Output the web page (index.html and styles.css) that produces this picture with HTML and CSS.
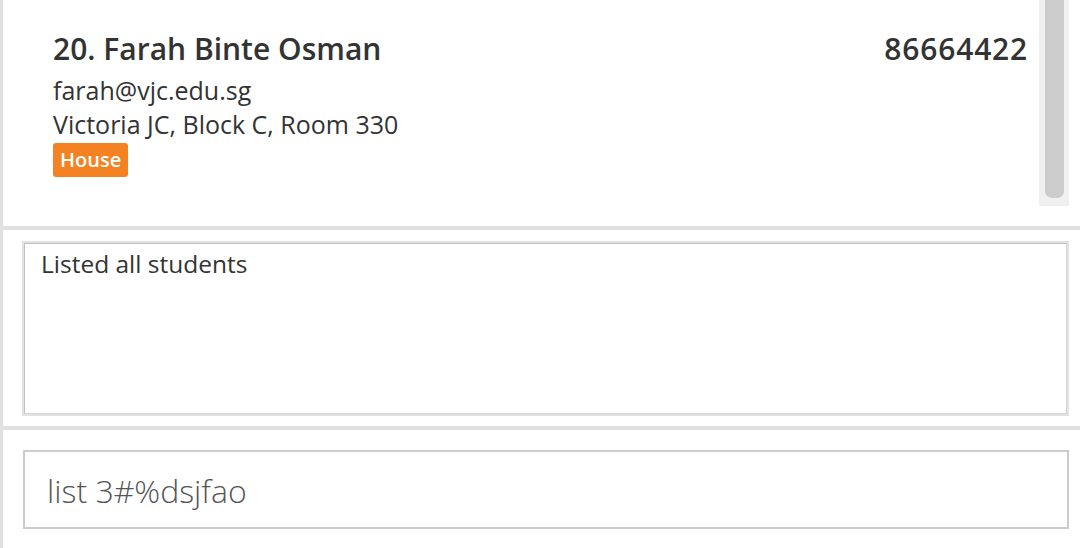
FILE: index.html
```html
<!DOCTYPE html>
<html>
<head>
<meta charset="utf-8">
<link rel="stylesheet" href="styles.css">
</head>
<body>
<div class="app">
  <section class="list-panel">
    <div class="card">
      <div class="card-info">
        <div class="name">20. Farah Binte Osman</div>
        <div class="line">farah@vjc.edu.sg</div>
        <div class="line">Victoria JC, Block C, Room 330</div>
        <div class="tags"><span class="tag">House</span></div>
      </div>
      <div class="phone">86664422</div>
    </div>
    <div class="scroll-track"><div class="scroll-thumb"></div></div>
  </section>
  <div class="sep"></div>
  <section class="result-panel">
    <div class="result-box">
      <div class="result-inner">Listed all students</div>
    </div>
  </section>
  <div class="sep"></div>
  <section class="command-panel">
    <div class="command-box">list 3#%dsjfao</div>
  </section>
</div>
</body>
</html>
```
FILE: styles.css
```css
html, body {
  margin: 0;
  padding: 0;
  background: #ffffff;
  font-family: "Open Sans", "Noto Sans", sans-serif;
  color: #333333;
}
.app {
  width: 1080px;
  height: 548px;
  overflow: hidden;
  display: flex;
  flex-direction: column;
}
.list-panel {
  height: 226px;
  border-left: 3px solid #e0e0e0;
  box-sizing: border-box;
  display: flex;
  align-items: flex-start;
  padding-right: 11px;
}
.card {
  flex: 1;
  display: flex;
  justify-content: space-between;
  padding: 25px 12px 0 50px;
}
.name {
  font-size: 30px;
  font-weight: 600;
  line-height: 48px;
}
.line {
  font-size: 25px;
  line-height: 34px;
}
.tags {
  display: flex;
  margin-top: 2px;
}
.tag {
  background: #f48223;
  color: #ffffff;
  font-size: 20px;
  font-weight: 600;
  line-height: 34px;
  padding: 0 7px;
  border-radius: 3px;
}
.phone {
  font-size: 30px;
  font-weight: 600;
  line-height: 48px;
  letter-spacing: 0.8px;
  margin-right: -1px;
}
.scroll-track {
  width: 30px;
  height: 206px;
  background: #f0f0f0;
  box-sizing: border-box;
  padding: 0 5px 8px 6px;
}
.scroll-thumb {
  height: 198px;
  background: #cccccc;
  border-radius: 0 0 7px 7px;
}
.sep {
  height: 4px;
  background: #e0e0e0;
  flex: none;
}
.result-panel {
  height: 196px;
  border-left: 3px solid #e0e0e0;
  box-sizing: border-box;
  padding: 11px 11px 0 19px;
}
.result-box {
  height: 175px;
  border: 2px solid #e2e2e2;
  box-sizing: border-box;
}
.result-inner {
  height: 100%;
  box-sizing: border-box;
  border: 1px solid #c0c0c0;
  border-right-color: #d4d4d4;
  border-bottom-color: #d4d4d4;
  padding: 3px 16px;
  font-size: 24.5px;
  line-height: 34px;
}
.command-panel {
  flex: 1;
  border-left: 3px solid #e0e0e0;
  box-sizing: border-box;
  padding: 20px 11px 0 20px;
}
.command-box {
  height: 79px;
  border: 2px solid #cccccc;
  box-sizing: border-box;
  padding: 1px 22px 0;
  font-size: 32px;
  font-weight: 300;
  line-height: 75px;
  color: #555555;
}
```
